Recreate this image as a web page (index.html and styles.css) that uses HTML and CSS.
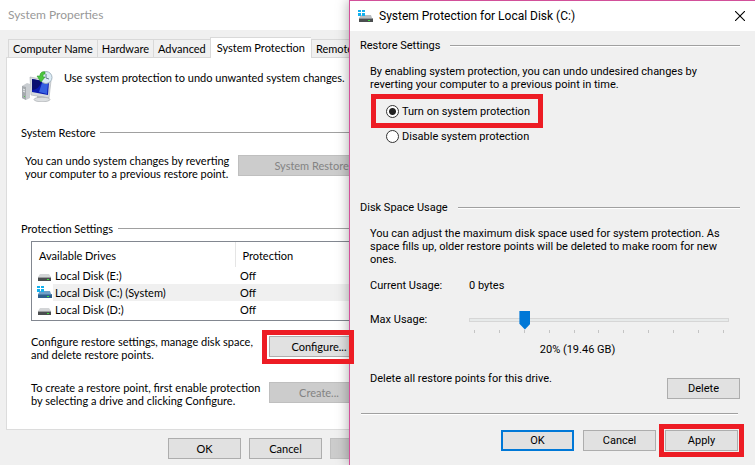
FILE: index.html
```html
<!DOCTYPE html>
<html lang="en">
<head>
  <meta charset="UTF-8">
  <meta name="viewport" content="width=device-width, initial-scale=1.0">
  <title>System Protection</title>
  <link rel="stylesheet" href="styles.css">
</head>
<body>

  <!-- drive icons shared by the list and the title bar -->
  <svg class="sprites" width="0" height="0">
    <symbol id="drive" viewBox="0 0 15 13">
      <path d="M3 5h9l2 3H1z" fill="#d3d5d7"/>
      <path d="M1 8h13v4H1z" fill="#4b4e50"/>
      <path d="M1 8h13v1H1z" fill="#9a9c9e"/>
      <path d="M10 10h2v1h-2z" fill="#3ee03e"/>
    </symbol>
    <symbol id="drive-system" viewBox="0 0 15 13">
      <path d="M3 5h10l1 3H1z" fill="#b9bdc1"/>
      <path d="M1 8h14v4H1z" fill="#4b4e50"/>
      <path d="M1 8h14v1H1z" fill="#8f9396"/>
      <path d="M10 10h2v1h-2z" fill="#3ee03e"/>
      <path d="M0 0h3v2H0zM4 0h3v2H4zM0 3h3v3H0zM4 3h3v3H4z" fill="#12b0ee"/>
    </symbol>
    <symbol id="drive-selected" viewBox="0 0 15 13">
      <path d="M3 5h10l1 3H1z" fill="#6f9fc8"/>
      <path d="M1 8h14v4H1z" fill="#2d5f8c"/>
      <path d="M1 8h14v1H1z" fill="#4c80ae"/>
      <path d="M10 10h2v1h-2z" fill="#3ee03e"/>
      <path d="M0 0h3v2H0zM4 0h3v2H4zM0 3h3v3H0zM4 3h3v3H4z" fill="#12b0ee"/>
    </symbol>
  </svg>

  <main class="desktop">

    <section class="window properties">
      <header class="titlebar">
        <h1>System Properties</h1>
      </header>

      <div class="tabs">
        <button class="tab">Computer Name</button>
        <button class="tab">Hardware</button>
        <button class="tab">Advanced</button>
        <button class="tab active">System Protection</button>
        <button class="tab">Remote</button>
      </div>

      <div class="panel">
        <div class="intro">
          <svg class="computer" viewBox="0 0 31 31">
            <path d="M0 15l5-3 3 1v14l-4 2-4-2z" fill="#c9cdd1"/>
            <path d="M0 15l4 1v13l-4-2z" fill="#a5aaae"/>
            <path d="M1 18l2 1M1 20l2 1" stroke="#eef1f3" stroke-width="1"/>
            <path d="M2 25h1v1H2z" fill="#4fd24f"/>
            <path d="M8 6l21 4-2 17-18-3z" fill="#d6dadd" stroke="#a9aeb3" stroke-width=".6"/>
            <path d="M10 8l17 3-1 13-16-3z" fill="#0a1bb0"/>
            <path d="M10 8l10 2c-2 5-5 9-10 9z" fill="#0a0f70"/>
            <path d="M20 12l6 1-1 10-8-2z" fill="#3560e0"/>
            <path d="M15 25l8 1v2l-8-1z" fill="#b4b8bb"/>
            <ellipse cx="20" cy="28.5" rx="8" ry="2.3" fill="#dcdfe1" stroke="#a2a6a9" stroke-width=".6"/>
            <circle cx="24" cy="6.5" r="6" fill="#dcecf6" stroke="#a5b5c0" stroke-width="1"/>
            <path d="M24 3v4l3 1" fill="none" stroke="#657a8c" stroke-width="1"/>
            <path d="M23 1c-4-1-5 2-5 4h-3l4 6 4-5h-2c0-2 0-3 2-3z" fill="#4cc63e" stroke="#2b9a2c" stroke-width=".6"/>
          </svg>
          <p>Use system protection to undo unwanted system changes.</p>
        </div>

        <h2 class="group">System Restore</h2>
        <div class="row restore">
          <p>You can undo system changes by reverting<br>your computer to a previous restore point.</p>
          <button class="btn" disabled>System Restore...</button>
        </div>

        <h2 class="group">Protection Settings</h2>
        <div class="list">
          <table class="drives">
            <thead>
              <tr><th class="name">Available Drives</th><th>Protection</th></tr>
            </thead>
            <tbody>
              <tr>
                <td class="name"><svg class="icon"><use href="#drive"/></svg><span>Local Disk (E:)</span></td>
                <td>Off</td>
              </tr>
              <tr class="selected">
                <td class="name"><svg class="icon"><use href="#drive-selected"/></svg><span>Local Disk (C:) (System)</span></td>
                <td>Off</td>
              </tr>
              <tr>
                <td class="name"><svg class="icon"><use href="#drive"/></svg><span>Local Disk (D:)</span></td>
                <td>Off</td>
              </tr>
            </tbody>
          </table>
        </div>

        <div class="row configure">
          <p>Configure restore settings, manage disk space,<br>and delete restore points.</p>
          <div class="marked">
            <button class="btn">Configure...</button>
            <span class="mark"></span>
          </div>
        </div>
        <div class="row">
          <p>To create a restore point, first enable protection<br>by selecting a drive and clicking Configure.</p>
          <button class="btn" disabled>Create...</button>
        </div>
      </div>

      <footer class="actions">
        <button class="btn">OK</button>
        <button class="btn">Cancel</button>
        <button class="btn" disabled></button>
      </footer>
    </section>

    <section class="window dialog">
      <header class="titlebar">
        <svg class="icon"><use href="#drive-system"/></svg>
        <h1>System Protection for Local Disk (C:)</h1>
        <button class="close" aria-label="Close">
          <svg viewBox="0 0 10 10"><path d="M0 0l10 10M10 0L0 10" stroke="#000" stroke-width="1.1"/></svg>
        </button>
      </header>

      <div class="content">
        <h2 class="group">Restore Settings</h2>
        <div class="block">
          <p>By enabling system protection, you can undo undesired changes by<br>reverting your computer to a previous point in time.</p>
          <div class="options">
            <label class="option highlight"><input type="radio" name="protection" checked>Turn on system protection</label>
            <label class="option"><input type="radio" name="protection">Disable system protection</label>
          </div>
        </div>

        <h2 class="group">Disk Space Usage</h2>
        <div class="block">
          <p>You can adjust the maximum disk space used for system protection. As<br>space fills up, older restore points will be deleted to make room for new<br>ones.</p>
          <div class="field">
            <span>Current Usage:</span>
            <span>0 bytes</span>
          </div>
          <div class="field max">
            <label for="max-usage">Max Usage:</label>
            <div class="slider">
              <input type="range" id="max-usage" min="0" max="100" value="20">
              <div class="ticks">
                <i></i><i></i><i></i><i></i><i></i><i></i><i></i><i></i><i></i><i></i><i></i>
              </div>
              <output for="max-usage">20% (19.46 GB)</output>
            </div>
          </div>
          <div class="field delete">
            <p>Delete all restore points for this drive.</p>
            <button class="btn">Delete</button>
          </div>
        </div>

        <footer class="actions">
          <button class="btn default">OK</button>
          <button class="btn">Cancel</button>
          <button class="btn highlight">Apply</button>
        </footer>
      </div>
    </section>

  </main>

</body>
</html>
```
FILE: styles.css
```css
* {
  box-sizing: border-box;
}

body {
  margin: 0;
  background: #f0f0f0;
  color: #000;
  font-family: Roboto, "Liberation Sans", sans-serif;
  font-size: 11px;
  line-height: 13px;
}

h1, h2, p {
  margin: 0;
  font-size: inherit;
  font-weight: normal;
}

button {
  font: inherit;
  color: inherit;
}

.sprites {
  position: absolute;
}

.desktop {
  position: relative;
  min-height: 100vh;
  overflow: hidden;
}

.window {
  position: absolute;
  top: 0;
  white-space: nowrap;
}

.titlebar {
  display: flex;
  align-items: center;
  background: #fff;
  font-size: 12px;
}

.icon {
  width: 15px;
  height: 13px;
  flex: none;
}

/* group heading followed by a rule */
.group {
  display: flex;
  align-items: center;
  gap: 5px;
}

.group::after {
  content: "";
  flex: 1;
  height: 1px;
  background: #a0a0a0;
}

.btn {
  min-width: 73px;
  height: 21px;
  padding: 0;
  border: 1px solid #adadad;
  background: #e1e1e1;
}

.btn:disabled {
  border-color: #bfbfbf;
  background: #ccc;
  color: #838383;
}

.btn.default {
  border: 2px solid #0078d7;
}

/* left window */
.properties {
  left: 0;
  width: 411px;
  background: #f0f0f0;
  font-family: Lato, "Liberation Sans", sans-serif;
}

.properties .titlebar {
  height: 30px;
  padding: 0 8px 2px;
  color: #999;
}

.tabs {
  display: flex;
  align-items: flex-end;
  height: 28px;
  padding: 0 8px;
}

.tab {
  height: 19px;
  padding: 0 4px;
  border: 1px solid #d9d9d9;
  border-right: 0;
  background: #f0f0f0;
}

.tab:last-child {
  border-right: 1px solid #d9d9d9;
}

.tab.active {
  height: 21px;
  padding: 0 6px 2px;
  border-bottom: 0;
  background: #fff;
  z-index: 1;
}

.panel {
  margin: -1px 6px 0;
  padding: 13px 0 22px;
  border: 1px solid #dcdcdc;
  background: #fff;
}

.panel .group {
  padding: 0 14px;
}

.intro {
  display: flex;
  gap: 11px;
  padding-left: 15px;
  margin-bottom: 24px;
}

.computer {
  width: 31px;
  height: 31px;
}

.row {
  display: grid;
  grid-template-columns: 1fr 100px;
  align-items: start;
  padding: 0 35px 0 24px;
}

.row.restore {
  grid-template-columns: 1fr 155px;
  margin: 15px 0 42px;
  padding: 0 11px 0 18px;
}

.row .btn {
  margin-top: 1px;
}

.row.configure {
  margin: 14px 0 20px;
}

.marked {
  position: relative;
  display: grid;
}

.mark {
  position: absolute;
  z-index: 2;
  left: -7px;
  top: -5px;
  width: 92px;
  height: 34px;
  border: 5px solid #ed1c24;
  pointer-events: none;
}

.list {
  margin: 6px 14px 0 24px;
  padding-bottom: 2px;
  border: 1px solid #828790;
}

.drives {
  width: 100%;
  border-collapse: collapse;
}

.drives th {
  height: 25px;
  padding: 1px 6px 0 7px;
  font-weight: normal;
  text-align: left;
}

.drives th.name {
  width: 203px;
  border-right: 1px solid #e5e5e5;
}

.drives td {
  height: 17px;
  padding: 0 5px;
}

.drives td.name {
  display: flex;
  align-items: center;
  padding-right: 0;
}

.drives td span {
  flex: 1;
  margin-left: 1px;
  padding: 2px;
}

.selected td:last-child,
.selected span {
  background: #f0f0f0;
}

.actions {
  display: flex;
  gap: 8px;
  justify-content: flex-end;
}

.properties .actions {
  padding: 8px 8px 12px;
}

/* dialog on top */
.dialog {
  left: 349px;
  right: 0;
  min-height: 100%;
  z-index: 1;
  border: 1px solid #d2509a;
  border-width: 1px 0 0 1px;
  background: #f0f0f0;
  box-shadow: 0 0 12px rgba(0, 0, 0, 0.35);
}

.dialog .titlebar {
  height: 30px;
  padding: 0 10px 0 8px;
  gap: 6px;
}

.close {
  margin-left: auto;
  padding: 0;
  border: 0;
  background: none;
  line-height: 0;
}

.close svg {
  width: 10px;
  height: 10px;
}

.content {
  padding: 8px 15px 14px 10px;
}

.content .group {
  gap: 10px;
}

.content .group::after {
  box-shadow: 0 1px #fff;
}

.block {
  padding: 13px 0 0 10px;
}

.options {
  display: grid;
  justify-items: start;
  gap: 1px;
  margin: 8px 0 53px 6px;
}

.option {
  display: flex;
  align-items: center;
  gap: 3px;
  height: 24px;
  padding: 0 8px 0 10px;
}

.highlight {
  outline: 5px solid #ed1c24;
}

.btn.highlight {
  outline-offset: 1px;
}

.option input {
  appearance: none;
  width: 13px;
  height: 13px;
  margin: 0;
  border: 1px solid #333;
  border-radius: 50%;
  background: #fff;
}

.option input:checked {
  background: radial-gradient(circle, #222 3px, #fff 4px);
}

.field {
  display: grid;
  grid-template-columns: 99px 1fr;
  margin-top: 13px;
}

.field.max {
  margin-top: 18px;
}

.field.max label {
  margin-top: 3px;
}

.slider {
  padding-right: 11px;
}

.slider input {
  appearance: none;
  display: block;
  width: 100%;
  height: 19px;
  margin: 0;
  background: none;
}

.slider input::-webkit-slider-runnable-track {
  height: 4px;
  border: 1px solid #d6d6d6;
  background: #e7eaea;
}

.slider input::-webkit-slider-thumb {
  appearance: none;
  width: 11px;
  height: 19px;
  margin-top: -8px;
  background: #0078d7;
  clip-path: polygon(0 0, 100% 0, 100% 70%, 50% 100%, 0 70%);
}

.ticks {
  display: flex;
  justify-content: space-between;
  padding: 1px 5px 0;
}

.ticks i {
  width: 1px;
  height: 3px;
  background: #c4c4c4;
}

.slider output {
  display: block;
  margin: 10px 43px 0 0;
  text-align: center;
}

.field.delete {
  grid-template-columns: 1fr 73px;
  margin-top: 16px;
}

.delete .btn {
  margin-top: 6px;
}

.content .actions {
  margin: 14px 2px 0 1px;
  padding-top: 16px;
  border-top: 1px solid #a0a0a0;
  box-shadow: inset 0 1px #fff;
  gap: 9px;
}
```
